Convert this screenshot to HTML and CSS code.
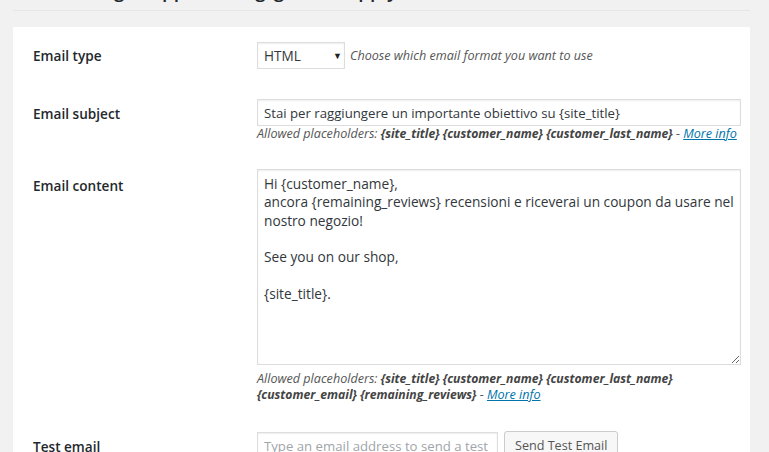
FILE: index.html
```html
<!DOCTYPE html>
<html lang="it">
<head>
    <meta charset="UTF-8">
    <meta name="viewport" content="width=device-width, initial-scale=1.0">
    <title>Email settings</title>
    <link rel="stylesheet" href="styles.css">
</head>
<body>
    <div class="wrap">
        <div class="section-head">
            <h2 class="section-title">get approaching goal to apply</h2>
        </div>

        <div class="settings-card">
            <table class="form-table">
                <tr>
                    <th>Email type</th>
                    <td>
                        <div class="type-row">
                            <div class="select-wrap">
                                <select class="select">
                                    <option>HTML</option>
                                    <option>Plain text</option>
                                </select>
                                <span class="select-arrow">&#9660;</span>
                            </div>
                            <span class="description">Choose which email format you want to use</span>
                        </div>
                    </td>
                </tr>
                <tr>
                    <th>Email subject</th>
                    <td>
                        <input type="text" class="text-input subject" value="Stai per raggiungere un importante obiettivo su {site_title}">
                        <div class="description">Allowed placeholders: <b>{site_title}</b> <b>{customer_name}</b> <b>{customer_last_name}</b> - <a href="#">More info</a></div>
                    </td>
                </tr>
                <tr>
                    <th>Email content</th>
                    <td>
                        <textarea class="text-area">Hi {customer_name},
ancora {remaining_reviews} recensioni e riceverai un coupon da usare nel nostro negozio!

See you on our shop,

{site_title}.</textarea>
                        <div class="description">Allowed placeholders: <b>{site_title}</b> <b>{customer_name}</b> <b>{customer_last_name}</b><br><b>{customer_email}</b> <b>{remaining_reviews}</b> - <a href="#">More info</a></div>
                    </td>
                </tr>
                <tr>
                    <th>Test email</th>
                    <td>
                        <div class="test-row">
                            <input type="text" class="text-input test" placeholder="Type an email address to send a test">
                            <button class="button">Send Test Email</button>
                        </div>
                    </td>
                </tr>
            </table>
        </div>
    </div>
</body>
</html>
```

FILE: styles.css
```css
* {
    box-sizing: border-box;
    margin: 0;
    padding: 0;
}

body {
    font-family: "Open Sans", "Noto Sans", sans-serif;
    font-size: 13px;
    color: #444;
    background-color: #f1f1f1;
    overflow: hidden;
}

.wrap {
    padding: 0 19px 0 13px;
}

.section-head {
    height: 11px;
    border-bottom: 1px solid #e6e6e6;
    margin-bottom: 16px;
    overflow: hidden;
}

.section-title {
    font-size: 19px;
    font-weight: 600;
    color: #23282d;
    line-height: 24px;
    margin-top: -22px;
    padding-left: 101px;
    word-spacing: 3px;
    white-space: nowrap;
}

.settings-card {
    background: white;
    padding: 0 9px 0 20px;
    height: 440px;
}

.form-table {
    border-collapse: collapse;
    table-layout: fixed;
    width: 100%;
}

.form-table th {
    width: 224px;
    text-align: left;
    vertical-align: top;
    padding: 20px 10px 20px 0;
    font-size: 13.6px;
    font-weight: 600;
    line-height: 18px;
    color: #23282d;
}

.form-table td {
    vertical-align: top;
    padding: 15px 0 15px 0;
}

.type-row {
    display: flex;
    align-items: center;
    gap: 5px;
}

.select-wrap {
    position: relative;
}

.select {
    display: block;
    width: 88px;
    height: 27px;
    padding: 2px 6px;
    font-family: inherit;
    font-size: 13.6px;
    color: #32373c;
    background: white;
    border: 1px solid #ddd;
    box-shadow: inset 0 1px 2px rgba(0,0,0,0.07);
    appearance: none;
    -webkit-appearance: none;
    border-radius: 0;
}

.select-arrow {
    position: absolute;
    right: 3px;
    top: 7px;
    font-size: 9px;
    color: #222;
    pointer-events: none;
}

.description {
    font-style: italic;
    font-size: 12.6px;
    line-height: 16px;
    color: #555;
    white-space: nowrap;
}

.description b {
    font-size: 12.2px;
    font-weight: 700;
    color: #444;
}

.description a {
    color: #0073aa;
}

.text-input {
    display: block;
    height: 27px;
    padding: 3px 6px;
    font-family: inherit;
    font-size: 13.2px;
    color: #32373c;
    border: 1px solid #ddd;
    box-shadow: inset 0 1px 2px rgba(0,0,0,0.07);
    background: white;
}

.text-input.subject {
    width: 484px;
    margin-top: -1px;
}

.text-input.test {
    width: 241px;
    margin-top: -1px;
}

.text-input::placeholder {
    color: #a0a5aa;
}

.text-area {
    display: block;
    width: 484px;
    height: 196px;
    padding: 5px 6px;
    font-family: inherit;
    font-size: 13.7px;
    line-height: 18.3px;
    color: #32373c;
    border: 1px solid #ddd;
    box-shadow: inset 0 1px 2px rgba(0,0,0,0.07);
    margin: -3px 0 6px;
}

.test-row {
    display: flex;
    gap: 6px;
}

.button {
    height: 28px;
    padding: 0 10px;
    font-family: inherit;
    font-size: 12.6px;
    color: #555;
    background: #f7f7f7;
    border: 1px solid #ccc;
    border-radius: 3px;
    box-shadow: 0 1px 0 #ccc;
    margin-top: -2px;
}
```
